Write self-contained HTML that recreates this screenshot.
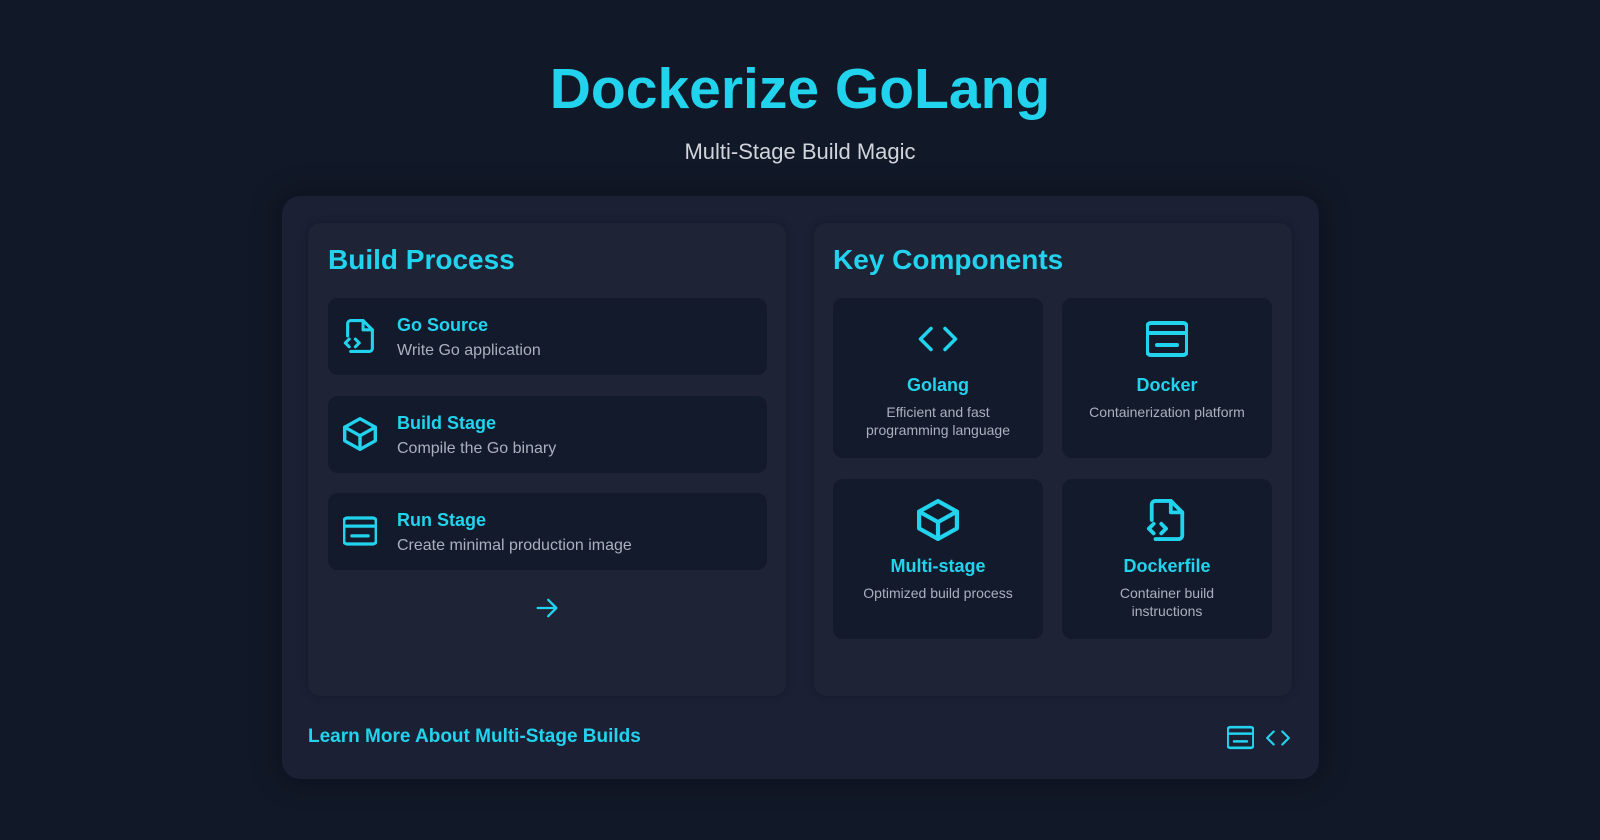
<!DOCTYPE html>
<html><head><meta charset="utf-8"><style>
*{margin:0;padding:0;box-sizing:border-box}
body{width:1600px;height:840px;background:#111827;font-family:"Liberation Sans",sans-serif;position:relative;overflow:hidden}
.a{position:absolute}
h1{position:absolute;left:0;width:1600px;top:56px;text-align:center;font-size:57px;font-weight:bold;color:#22d3ee;letter-spacing:0}
.sub{left:0;width:1600px;top:139px;text-align:center;font-size:22px;color:#d1d5db}
.outer{left:282px;top:196px;width:1037px;height:583px;background:#1b2034;border-radius:18px;box-shadow:0 0 30px rgba(0,0,0,.35)}
.panel{top:223px;width:478px;height:473px;background:#1e2336;border-radius:12px;box-shadow:0 0 8px rgba(0,0,0,.25)}
.h2{font-size:28px;font-weight:bold;color:#22d3ee}
.row{left:328px;width:439px;height:77px;background:#131a2b;border-radius:10px}
.row svg{position:absolute;left:15px;top:21px}
.row .t{position:absolute;left:69px;top:17px;font-size:18px;font-weight:bold;color:#22d3ee}
.row .d{position:absolute;left:69px;top:44px;font-size:16px;color:#aab0bd}
.card{width:210px;height:160px;background:#131a2b;border-radius:10px;text-align:center}
.card svg{position:absolute;left:84px;top:20px}
.card .t{position:absolute;left:0;width:100%;top:77px;font-size:18px;font-weight:bold;color:#22d3ee}
.card .d{position:absolute;left:20px;width:170px;top:105px;font-size:14px;line-height:18px;color:#aab0bd}
svg{fill:none;stroke:#22d3ee;stroke-width:2;stroke-linecap:round;stroke-linejoin:round}
</style></head><body>
<h1>Dockerize GoLang</h1>
<div class="a sub">Multi-Stage Build Magic</div>
<div class="a outer"></div>
<div class="a panel" style="left:308px"></div>
<div class="a panel" style="left:814px"></div>
<div class="a h2" style="left:328px;top:244px">Build Process</div>
<div class="a h2" style="left:833px;top:244px">Key Components</div>

<div class="a row" style="top:298px"><svg width="34" height="34" viewBox="1 1 22 22"><path d="M4 12V4a2 2 0 0 1 2-2h8l6 6v12a2 2 0 0 1-2 2H6"/><path d="M14 2v6h6"/><path d="M5 14l-2.5 2.5L5 19M9 14l2.5 2.5L9 19"/></svg><div class="t">Go Source</div><div class="d">Write Go application</div></div>
<div class="a row" style="top:396px"><svg width="34" height="34" viewBox="2 2 20 20"><path d="M21 8l-9-5-9 5v8l9 5 9-5z"/><path d="M3 8l9 5 9-5M12 13v8"/></svg><div class="t">Build Stage</div><div class="d">Compile the Go binary</div></div>
<div class="a row" style="top:493px"><svg width="34" height="34" viewBox="1.5 1.5 21 21"><rect x="2" y="4" width="20" height="16" rx="2"/><path d="M2 9h20M7 15h10"/></svg><div class="t">Run Stage</div><div class="d">Create minimal production image</div></div>

<svg class="a" style="left:533px;top:594px" width="28" height="28" viewBox="0 0 24 24"><path d="M4 12h16M13 5l7 7-7 7"/></svg>

<div class="a card" style="left:833px;top:298px"><svg width="42" height="42" viewBox="0 0 24 24"><path d="M8 6l-6 6 6 6M16 6l6 6-6 6"/></svg><div class="t">Golang</div><div class="d">Efficient and fast programming language</div></div>
<div class="a card" style="left:1062px;top:298px"><svg width="42" height="42" viewBox="1.5 1.5 21 21"><rect x="2" y="4" width="20" height="16" rx="2"/><path d="M2 9h20M7 15h10"/></svg><div class="t">Docker</div><div class="d">Containerization platform</div></div>
<div class="a card" style="left:833px;top:479px"><svg width="42" height="42" viewBox="2 2 20 20"><path d="M21 8l-9-5-9 5v8l9 5 9-5z"/><path d="M3 8l9 5 9-5M12 13v8"/></svg><div class="t">Multi-stage</div><div class="d">Optimized build process</div></div>
<div class="a card" style="left:1062px;top:479px"><svg width="42" height="42" viewBox="1 1 22 22"><path d="M4 12V4a2 2 0 0 1 2-2h8l6 6v12a2 2 0 0 1-2 2H6"/><path d="M14 2v6h6"/><path d="M5 14l-2.5 2.5L5 19M9 14l2.5 2.5L9 19"/></svg><div class="t">Dockerfile</div><div class="d" style="left:40px;width:130px">Container build instructions</div></div>

<div class="a" style="left:308px;top:726px;font-size:19px;font-weight:bold;color:#22d3ee">Learn More About Multi-Stage Builds</div>
<svg class="a" style="left:1227px;top:724px" width="27" height="27" viewBox="1.5 1.5 21 21"><rect x="2" y="4" width="20" height="16" rx="2"/><path d="M2 9h20M7 15h10"/></svg>
<svg class="a" style="left:1265px;top:725px" width="26" height="26" viewBox="0 0 24 24"><path d="M8 6l-6 6 6 6M16 6l6 6-6 6"/></svg>
</body></html>
